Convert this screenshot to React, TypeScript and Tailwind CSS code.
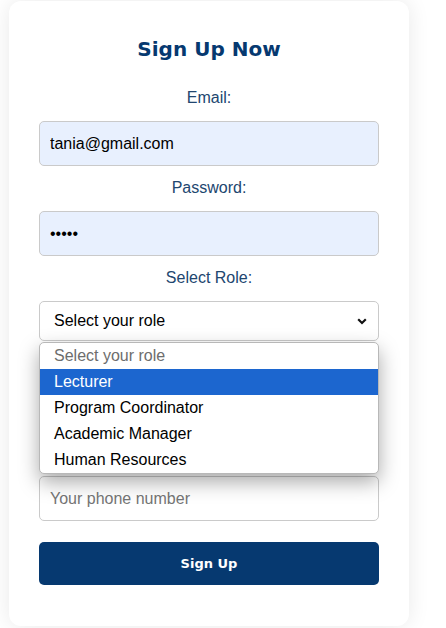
import React from 'react'

const ROLES = ['Lecturer', 'Program Coordinator', 'Academic Manager', 'Human Resources']

const label = 'block text-center text-[16px] leading-[18px] text-[#21466f] mb-[14px]'
const field =
  'block w-full h-[45px] px-[10px] rounded-[5px] border border-[#cacaca] text-[16px] text-black outline-none'

export default function App() {
  return (
    <div className="min-h-[628px] bg-white pt-px font-['Liberation_Sans',Arial,sans-serif]">
      <div className="ml-[9px] w-[400px] h-[625px] rounded-[12px] bg-white shadow-[0_0_22px_rgba(0,0,0,0.09)] px-[30px] pt-[36px]">
        <h2 className="text-center text-[20px] leading-[24px] font-extrabold text-[#063970] font-['DejaVu_Sans',Verdana,sans-serif] mb-[28px]">
          Sign Up Now
        </h2>

        <label className={label}>Email:</label>
        <input className={`${field} bg-[#e8f0fe] mb-[13px]`} defaultValue="tania@gmail.com" />

        <label className={label}>Password:</label>
        <input
          type="password"
          className={`${field} bg-[#e8f0fe] mb-[13px]`}
          defaultValue="12345"
        />

        <label className={label}>Select Role:</label>
        <div className="relative mb-[13px]">
          <div className="flex items-center justify-between h-[40px] pl-[14px] pr-[10px] rounded-[5px] border border-[#cacaca] bg-white text-[16px] text-black">
            <span>Select your role</span>
            <svg width="10" height="7" viewBox="0 0 10 7" className="mr-[1px]">
              <path d="M1.2 1.3 L5 5 L8.8 1.3" fill="none" stroke="#111" strokeWidth="2.2" />
            </svg>
          </div>

          {/* open option list, drawn over the fields below */}
          <ul className="absolute left-0 right-0 top-[calc(100%+1px)] z-10 rounded-[5px] border border-[#b8b8b8] bg-white shadow-[0_8px_20px_rgba(0,0,0,0.34)] overflow-hidden text-[16px] leading-[26px]">
            <li className="pl-[14px] h-[26px] text-[#6d6d6d]">Select your role</li>
            {ROLES.map((r, i) => (
              <li
                key={r}
                className={
                  i === 0
                    ? 'pl-[14px] h-[26px] bg-[#1c66cf] text-white'
                    : 'pl-[14px] h-[26px] text-black'
                }
              >
                {r}
              </li>
            ))}
          </ul>
        </div>

        <label className={`${label} invisible`}>Full Name:</label>
        <input className={`${field} bg-white mb-[13px]`} />

        <label className={`${label} invisible`}>Phone Number:</label>
        <input
          className={`${field} bg-white placeholder:text-[#757575]`}
          placeholder="Your phone number"
        />

        <button className="mt-[21px] w-full h-[43px] rounded-[5px] bg-[#063970] text-white text-[13px] font-extrabold font-['DejaVu_Sans',Verdana,sans-serif]">
          Sign Up
        </button>
      </div>
    </div>
  )
}
